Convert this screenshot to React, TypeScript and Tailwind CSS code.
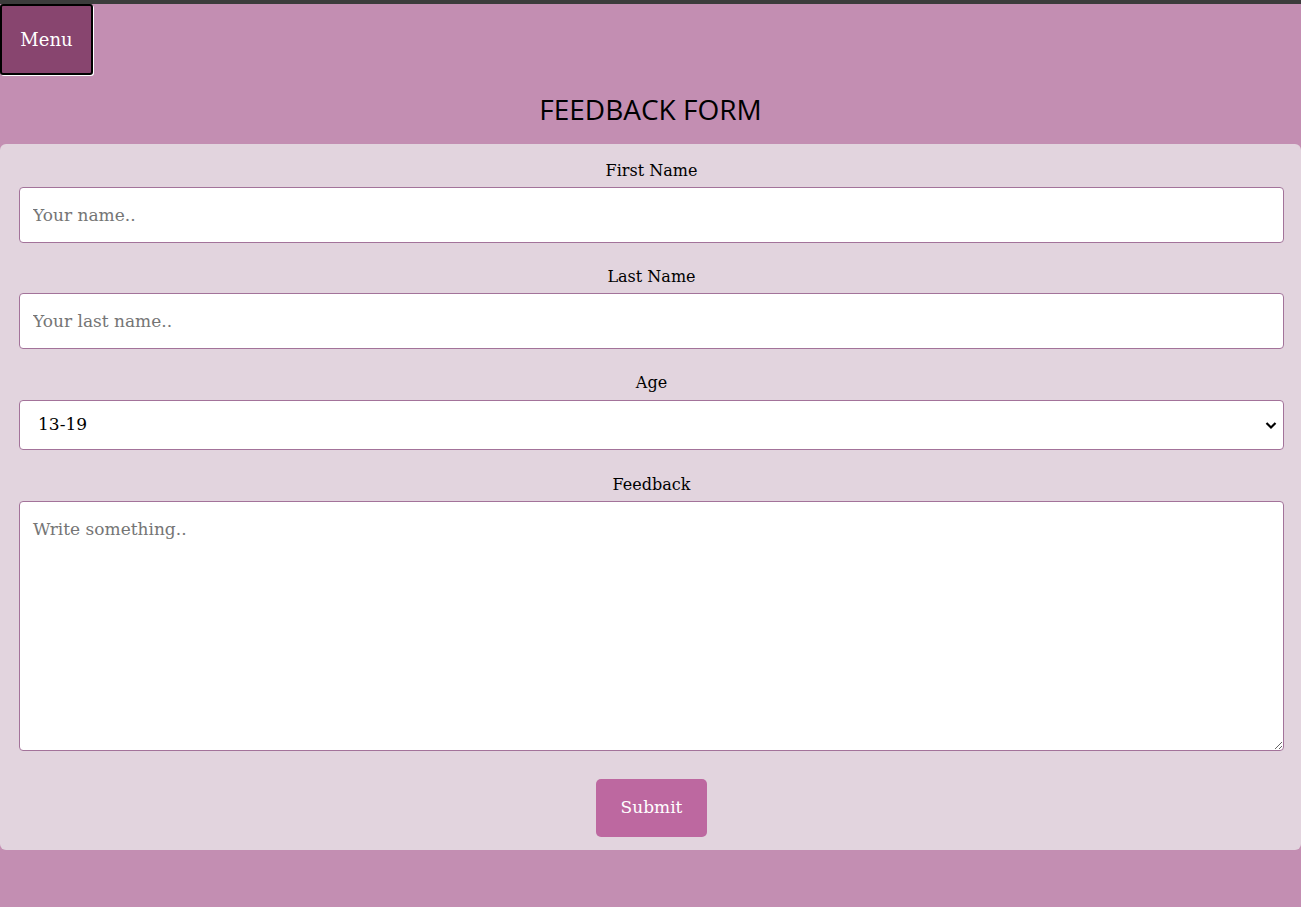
import { useState } from "react";

const serif = "font-['DejaVu_Serif',Georgia,serif]";

const fieldCls =
  "block w-full rounded-[4px] border border-[#a3739a] bg-white px-[13px] text-[17px] text-black outline-none placeholder:text-[#757575]";

const Label = ({ children, htmlFor }: { children: string; htmlFor: string }) => (
  <label htmlFor={htmlFor} className="block h-5 text-center text-[16px] leading-5 text-black">
    {children}
  </label>
);

const App = () => {
  const [age, setAge] = useState("13-19");

  return (
    <div className={`min-h-[907px] bg-[#c38eb2] ${serif}`}>
      <div className="h-[4px] bg-[#3c3c3c]" />
      <button className="h-[71px] w-[93px] rounded-[3px] border-2 border-black bg-[#88456f] text-[18px] text-white shadow-[1px_1px_0_#ffffff]">
        Menu
      </button>
      <h1 className="mt-[15px] mb-[16px] text-center font-['Open_Sans',sans-serif] text-[28px] leading-[38px] text-black">
        FEEDBACK FORM
      </h1>
      <form
        className="rounded-[6px] bg-[#e2d4de] pl-[19px] pr-[17px] pt-[17px] pb-[13px]"
        onSubmit={(e) => e.preventDefault()}
      >
        <Label htmlFor="fname">First Name</Label>
        <input id="fname" placeholder="Your name.." className={`${fieldCls} mt-[6px] h-[56px]`} />

        <div className="mt-[24px]">
          <Label htmlFor="lname">Last Name</Label>
        </div>
        <input id="lname" placeholder="Your last name.." className={`${fieldCls} mt-[6px] h-[56px]`} />

        <div className="mt-[24px]">
          <Label htmlFor="age">Age</Label>
        </div>
        <div className="relative mt-[7px]">
          <select
            id="age"
            value={age}
            onChange={(e) => setAge(e.target.value)}
            className={`${fieldCls} h-[50px] appearance-none pl-[18px]`}
          >
            <option>0-12</option>
            <option>13-19</option>
            <option>20-35</option>
            <option>36-60</option>
            <option>60+</option>
          </select>
          <svg
            className="pointer-events-none absolute right-[6px] top-1/2 -translate-y-1/2"
            width="14"
            height="14"
            viewBox="0 0 14 14"
          >
            <path d="M2.5 5 L7 9.5 L11.5 5" fill="none" stroke="#000" strokeWidth="2.2" />
          </svg>
        </div>

        <div className="mt-[25px]">
          <Label htmlFor="feedback">Feedback</Label>
        </div>
        <textarea
          id="feedback"
          placeholder="Write something.."
          className={`${fieldCls} mt-[6px] h-[250px] resize-y py-[15px]`}
        />

        <div className="mt-[28px] flex justify-center">
          <button
            type="submit"
            className="h-[58px] w-[111px] rounded-[5px] bg-[#bd68a0] text-[17px] text-white"
          >
            Submit
          </button>
        </div>
      </form>
    </div>
  );
};

export default App;
